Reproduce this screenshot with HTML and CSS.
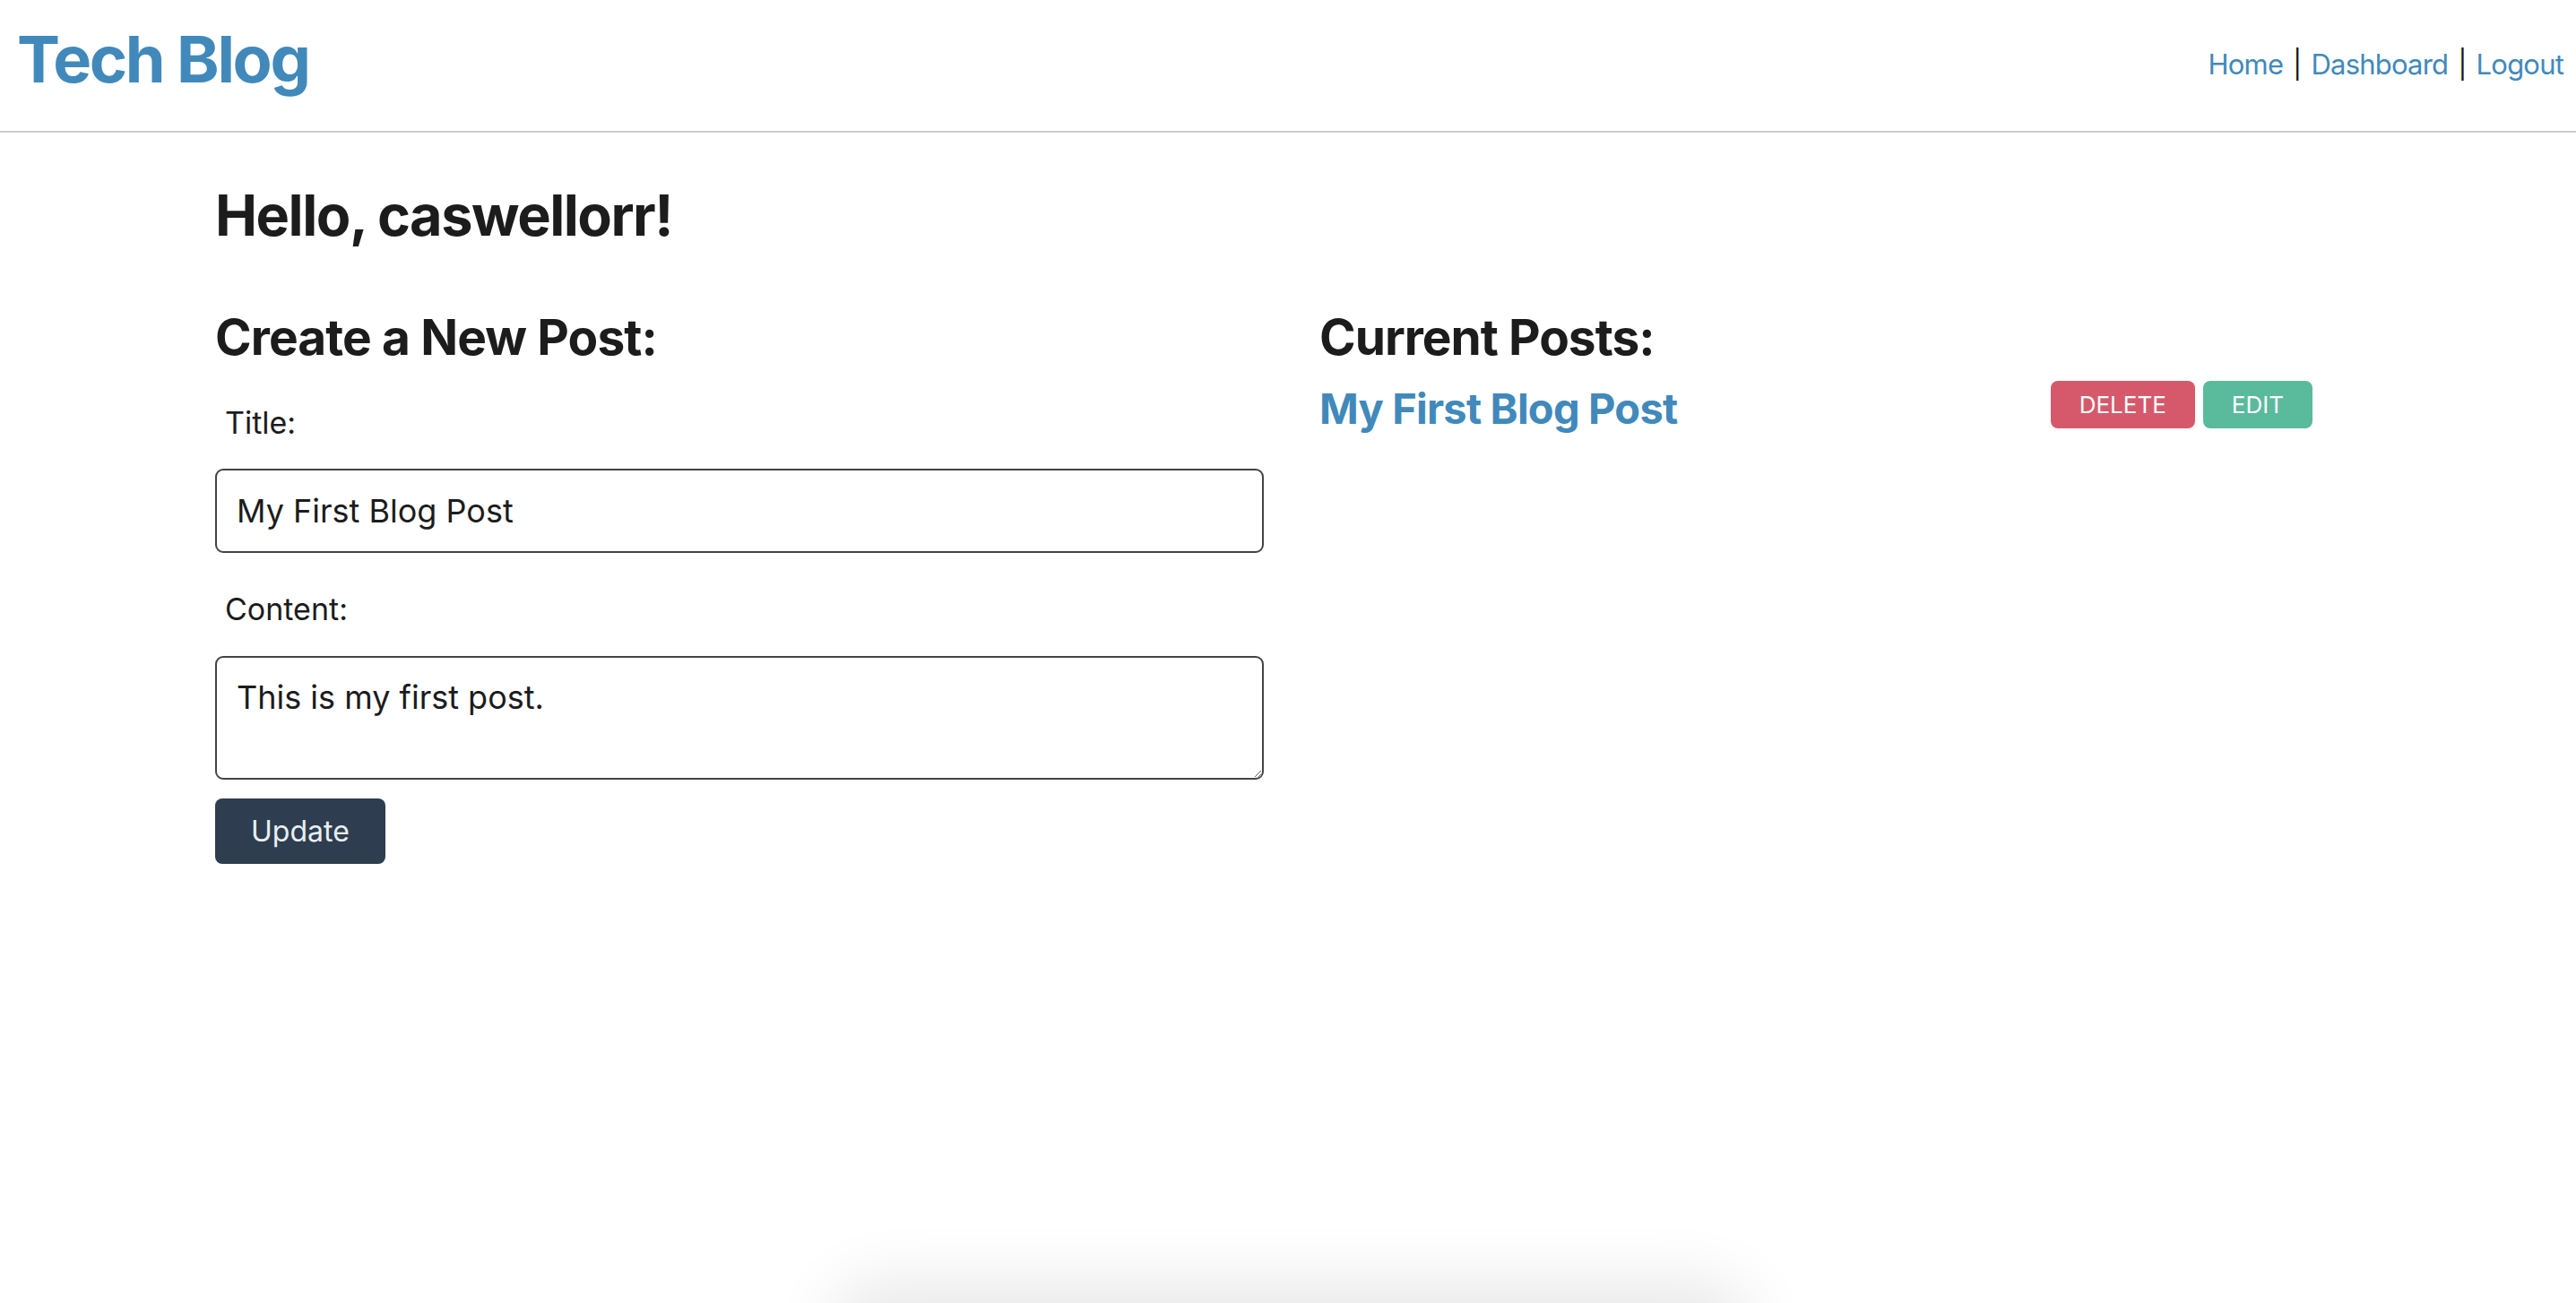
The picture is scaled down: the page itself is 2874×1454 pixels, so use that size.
FILE: index.html
```html
<!DOCTYPE html>
<html lang="en">
<head>
<meta charset="utf-8">
<title>Tech Blog</title>
<link rel="stylesheet" href="styles.css">
</head>
<body>
<header class="site-header">
  <a class="logo" href="#">Tech Blog</a>
  <nav class="nav">
    <a href="#">Home</a> | <a href="#">Dashboard</a> | <a href="#">Logout</a>
  </nav>
</header>
<main class="container">
  <h1 class="greeting">Hello, caswellorr!</h1>
  <div class="columns">
    <section class="new-post">
      <h2 class="section-title">Create a New Post:</h2>
      <form class="post-form">
        <label class="field-label" for="title">Title:</label>
        <input class="text-input" id="title" type="text" value="My First Blog Post">
        <label class="field-label label-content" for="content">Content:</label>
        <textarea class="text-area" id="content">This is my first post.</textarea>
        <button class="btn-update" type="button">Update</button>
      </form>
    </section>
    <section class="current-posts">
      <h2 class="section-title title-current">Current Posts:</h2>
      <div class="post-row">
        <a class="post-link" href="#">My First Blog Post</a>
        <div class="post-actions">
          <button class="btn-small btn-delete" type="button">DELETE</button>
          <button class="btn-small btn-edit" type="button">EDIT</button>
        </div>
      </div>
    </section>
  </div>
</main>
<div class="dock-shadow"></div>
</body>
</html>
```
FILE: styles.css
```css
html, body {
  margin: 0;
  padding: 0;
  height: 100%;
  overflow: hidden;
  background: #ffffff;
}
body {
  font-family: Inter, "Noto Sans", sans-serif;
  color: #1c1c1c;
}
a {
  color: #4189bb;
  text-decoration: none;
}
.site-header {
  height: 146px;
  border-bottom: 2px solid #cccccc;
  display: flex;
  justify-content: space-between;
  align-items: flex-start;
  padding: 0 14px 0 19px;
}
.logo {
  margin-top: 30px;
  font-size: 72px;
  line-height: 72px;
  font-weight: 700;
  letter-spacing: -2.3px;
}
.nav {
  margin-top: 56px;
  font-size: 31px;
  line-height: 32px;
  letter-spacing: -0.8px;
  word-spacing: 3px;
  color: #1c1c1c;
}
.container {
  padding: 0 0 0 240px;
}
.greeting {
  margin: 61px 0 0 0;
  font-size: 63px;
  line-height: 63px;
  font-weight: 700;
  letter-spacing: -1.5px;
}
.columns {
  display: grid;
  grid-template-columns: 1170px 1108px;
  column-gap: 62px;
  margin-top: 77px;
}
.section-title {
  margin: 0;
  font-size: 55px;
  line-height: 55px;
  font-weight: 700;
  letter-spacing: -0.9px;
}
.title-current {
  letter-spacing: -1px;
}
.post-form {
  display: flex;
  flex-direction: column;
  align-items: flex-start;
}
.field-label {
  margin: 51px 0 0 11px;
  font-size: 34px;
  line-height: 34px;
}
.label-content {
  margin-top: 46px;
}
.text-input {
  box-sizing: border-box;
  width: 1170px;
  height: 94px;
  margin-top: 34px;
  border: 2px solid #444444;
  border-radius: 9px;
  padding: 0 22px;
  font-family: Inter, "Noto Sans", sans-serif;
  font-size: 36px;
  color: #1c1c1c;
  background: #ffffff;
}
.text-area {
  box-sizing: border-box;
  width: 1170px;
  height: 138px;
  margin-top: 35px;
  border: 2px solid #444444;
  border-radius: 9px;
  padding: 23px 22px;
  font-family: Inter, "Noto Sans", sans-serif;
  font-size: 36px;
  line-height: 1.2;
  color: #1c1c1c;
  background: #ffffff;
  resize: vertical;
}
.btn-update {
  margin-top: 21px;
  height: 73px;
  padding: 0 40px;
  border: none;
  border-radius: 8px;
  background: #2e3d4f;
  color: #e8eff3;
  font-family: Inter, "Noto Sans", sans-serif;
  font-size: 32px;
}
.post-row {
  margin-top: 21px;
  display: flex;
  justify-content: space-between;
  align-items: flex-start;
}
.post-link {
  margin-top: 7px;
  font-size: 47px;
  line-height: 47px;
  font-weight: 700;
  letter-spacing: -0.8px;
}
.post-actions {
  display: flex;
  gap: 9px;
}
.btn-small {
  height: 53px;
  padding: 0 32px;
  border: none;
  border-radius: 8px;
  color: #ffffff;
  font-family: Inter, "Noto Sans", sans-serif;
  font-size: 26px;
}
.btn-delete {
  background: #d6596b;
}
.btn-edit {
  background: #5aba9c;
}
.dock-shadow {
  position: fixed;
  left: 950px;
  width: 980px;
  bottom: -60px;
  height: 60px;
  border-radius: 30px;
  box-shadow: 0 0 70px 25px rgba(0, 0, 0, 0.09);
}
```
